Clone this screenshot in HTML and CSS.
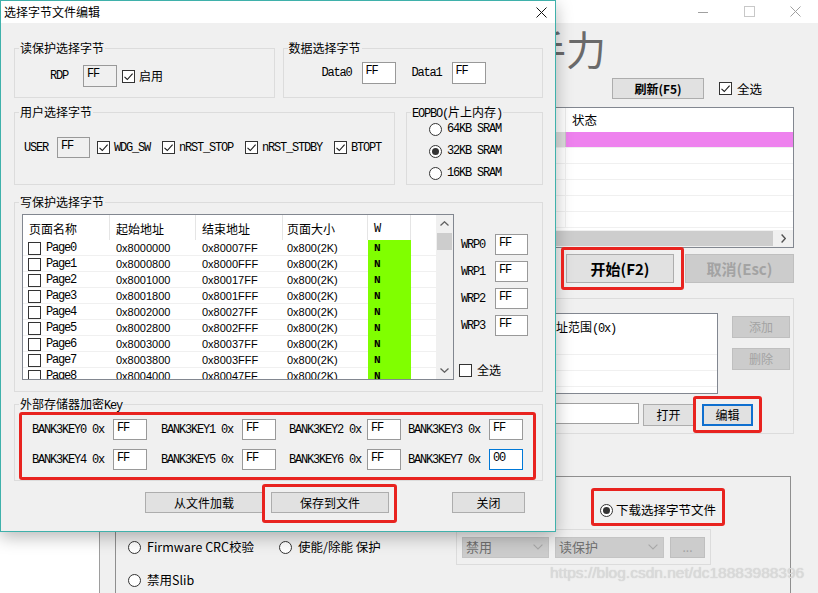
FILE: index.html
```html
<!DOCTYPE html>
<html lang="zh-CN">
<head>
<meta charset="utf-8">
<title>选择字节文件编辑</title>
<link rel="stylesheet" href="styles.css">
</head>
<body>
<div class="desktop">

  <div class="mainwin">
    <div class="mw-title">
      <span class="wc"><svg width="12" height="12" viewBox="0 0 12 12"><path d="M1 6.5H11" stroke="#a0a0a0" stroke-width="1"/></svg></span>
      <span class="wc"><svg width="11" height="11" viewBox="0 0 11 11"><rect x="0.5" y="0.5" width="10" height="10" fill="none" stroke="#c8c8c8" stroke-width="1"/></svg></span>
      <span class="wc"><svg width="11" height="11" viewBox="0 0 11 11"><path d="M0.5 0.5L10.5 10.5M10.5 0.5L0.5 10.5" stroke="#a0a0a0" stroke-width="1"/></svg></span>
    </div>
    <div class="mw-body">
      <div class="apptitle">手力</div>
      <div class="toolbar">
        <div class="btn refresh">刷新(F5)</div>
        <span class="cb tb-cb"><svg viewBox="0 0 11 11" width="11" height="11"><path d="M1.5 5.8 4.3 8.5 9.6 2.6" fill="none" stroke="#1a1a1a" stroke-width="1.1"/></svg></span>
        <span class="cb-lbl">全选</span>
      </div>
      <div class="applist">
        <div class="al-head"><div class="al-c1">端口</div><div class="al-c2">状态</div></div>
        <div class="al-row sel"><div class="al-c1"></div><div class="al-c2"></div></div>
        <div class="al-row"><div class="al-c1"></div><div class="al-c2"></div></div>
        <div class="al-row"><div class="al-c1"></div><div class="al-c2"></div></div>
        <div class="al-row"><div class="al-c1"></div><div class="al-c2"></div></div>
        <div class="al-row"><div class="al-c1"></div><div class="al-c2"></div></div>
        <div class="al-row"><div class="al-c1"></div><div class="al-c2"></div></div>
        <div class="hscroll">
          <div class="hs-thumb"></div>
          <div class="hs-arrow"><svg width="5" height="9" viewBox="0 0 5 9"><path d="M0.6 0.6 4.3 4.5 0.6 8.4" fill="none" stroke="#505050" stroke-width="1.4"/></svg></div>
        </div>
      </div>
      <div class="actions">
        <div class="btn bigbtn start">开始(F2)</div>
        <div class="btn bigbtn cancel dis">取消(Esc)</div>
      </div>
      <div class="mgroup">
        <div class="mg-top">
          <div class="addrlist">
            <div class="ad-head">地址范围<span class="mono">(0x)</span></div>
            <div class="ad-row"></div>
            <div class="ad-row"></div>
            <div class="ad-row"></div>
          </div>
          <div class="side-btns">
            <div class="btn sbtn dis">添加</div>
            <div class="btn sbtn dis">删除</div>
          </div>
        </div>
        <div class="fileline">
          <div class="fileinput"></div>
          <div class="btn fbtn open">打开</div>
          <div class="btn fbtn edit">编辑</div>
        </div>
      </div>
      <div class="lower">
        <div class="rowA">
          <span class="rb on"></span><span class="rb-lbl dl">下载选择字节文件</span>
        </div>
        <div class="rowB">
          <div class="ropt ropt1"><span class="rb"></span><span class="rb-lbl">Firmware CRC校验</span></div>
          <div class="ropt ropt2"><span class="rb"></span><span class="rb-lbl">使能/除能 保护</span></div>
          <div class="combos">
            <div class="combo c-dis">禁用<svg width="10" height="6" viewBox="0 0 10 6"><path d="M0.6 0.6 5 5 9.4 0.6" fill="none" stroke="#a8a8a8" stroke-width="1.1"/></svg></div>
            <div class="combo c-rp">读保护<svg width="10" height="6" viewBox="0 0 10 6"><path d="M0.6 0.6 5 5 9.4 0.6" fill="none" stroke="#a8a8a8" stroke-width="1.1"/></svg></div>
            <div class="btn dis dots">...</div>
          </div>
        </div>
        <div class="rowC">
          <span class="rb"></span><span class="rb-lbl">禁用Slib</span>
        </div>
      </div>
    </div>
  </div>

  <div class="dialog">
    <div class="dlg-title">
      <span>选择字节文件编辑</span>
      <svg width="11" height="11" viewBox="0 0 11 11"><path d="M0.5 0.5L10.5 10.5M10.5 0.5L0.5 10.5" stroke="#111" stroke-width="1"/></svg>
    </div>
    <div class="dlg-body">
      <div class="row row1">
        <div class="grp g1">
          <div class="gt">读保护选择字节</div>
          <div class="gr">
            <span class="mono">RDP</span>
            <span class="inp ro mono rdp-inp">FF</span>
            <span class="cb rdp-cb"><svg viewBox="0 0 11 11" width="11" height="11"><path d="M1.5 5.8 4.3 8.5 9.6 2.6" fill="none" stroke="#1a1a1a" stroke-width="1.1"/></svg></span>
            <span class="cb-lbl">启用</span>
          </div>
        </div>
        <div class="grp g2">
          <div class="gt">数据选择字节</div>
          <div class="gr">
            <span class="mono">Data0</span>
            <span class="inp mono d-inp">FF</span>
            <span class="mono d1-lbl">Data1</span>
            <span class="inp mono d-inp">FF</span>
          </div>
        </div>
      </div>

      <div class="row row2">
        <div class="grp g3">
          <div class="gt">用户选择字节</div>
          <div class="gr">
            <span class="mono">USER</span>
            <span class="inp ro mono u-inp">FF</span>
            <span class="cb ucb first"><svg viewBox="0 0 11 11" width="11" height="11"><path d="M1.5 5.8 4.3 8.5 9.6 2.6" fill="none" stroke="#1a1a1a" stroke-width="1.1"/></svg></span>
            <span class="mono cb-lbl">WDG_SW</span>
            <span class="cb ucb"><svg viewBox="0 0 11 11" width="11" height="11"><path d="M1.5 5.8 4.3 8.5 9.6 2.6" fill="none" stroke="#1a1a1a" stroke-width="1.1"/></svg></span>
            <span class="mono cb-lbl">nRST_STOP</span>
            <span class="cb ucb"><svg viewBox="0 0 11 11" width="11" height="11"><path d="M1.5 5.8 4.3 8.5 9.6 2.6" fill="none" stroke="#1a1a1a" stroke-width="1.1"/></svg></span>
            <span class="mono cb-lbl">nRST_STDBY</span>
            <span class="cb ucb"><svg viewBox="0 0 11 11" width="11" height="11"><path d="M1.5 5.8 4.3 8.5 9.6 2.6" fill="none" stroke="#1a1a1a" stroke-width="1.1"/></svg></span>
            <span class="mono cb-lbl">BTOPT</span>
          </div>
        </div>
        <div class="grp g4">
          <div class="gt"><span class="mono">EOPBO(</span>片上内存<span class="mono">)</span></div>
          <div class="radios">
            <div class="rrow"><span class="rb"></span><span class="mono rr-lbl">64KB SRAM</span></div>
            <div class="rrow"><span class="rb on"></span><span class="mono rr-lbl">32KB SRAM</span></div>
            <div class="rrow"><span class="rb"></span><span class="mono rr-lbl">16KB SRAM</span></div>
          </div>
        </div>
      </div>

      <div class="grp g5">
        <div class="gt">写保护选择字节</div>
        <div class="g5-inner">
          <div class="ptable">
            <div class="pt-main">
              <div class="pt-head">
                <div>页面名称</div><div>起始地址</div><div>结束地址</div><div class="h4">页面大小</div><div class="mono">W</div><div class="blank"></div>
              </div>
              <div class="pt-row"><div class="pc1"><span class="cb"></span><span class="mono pname">Page0</span></div><div class="hex">0x8000000</div><div class="hex">0x80007FF</div><div class="hex sz">0x800(2K)</div><div class="wcell mono">N</div><div></div></div>
              <div class="pt-row"><div class="pc1"><span class="cb"></span><span class="mono pname">Page1</span></div><div class="hex">0x8000800</div><div class="hex">0x8000FFF</div><div class="hex sz">0x800(2K)</div><div class="wcell mono">N</div><div></div></div>
              <div class="pt-row"><div class="pc1"><span class="cb"></span><span class="mono pname">Page2</span></div><div class="hex">0x8001000</div><div class="hex">0x80017FF</div><div class="hex sz">0x800(2K)</div><div class="wcell mono">N</div><div></div></div>
              <div class="pt-row"><div class="pc1"><span class="cb"></span><span class="mono pname">Page3</span></div><div class="hex">0x8001800</div><div class="hex">0x8001FFF</div><div class="hex sz">0x800(2K)</div><div class="wcell mono">N</div><div></div></div>
              <div class="pt-row"><div class="pc1"><span class="cb"></span><span class="mono pname">Page4</span></div><div class="hex">0x8002000</div><div class="hex">0x80027FF</div><div class="hex sz">0x800(2K)</div><div class="wcell mono">N</div><div></div></div>
              <div class="pt-row"><div class="pc1"><span class="cb"></span><span class="mono pname">Page5</span></div><div class="hex">0x8002800</div><div class="hex">0x8002FFF</div><div class="hex sz">0x800(2K)</div><div class="wcell mono">N</div><div></div></div>
              <div class="pt-row"><div class="pc1"><span class="cb"></span><span class="mono pname">Page6</span></div><div class="hex">0x8003000</div><div class="hex">0x80037FF</div><div class="hex sz">0x800(2K)</div><div class="wcell mono">N</div><div></div></div>
              <div class="pt-row"><div class="pc1"><span class="cb"></span><span class="mono pname">Page7</span></div><div class="hex">0x8003800</div><div class="hex">0x8003FFF</div><div class="hex sz">0x800(2K)</div><div class="wcell mono">N</div><div></div></div>
              <div class="pt-row"><div class="pc1"><span class="cb"></span><span class="mono pname">Page8</span></div><div class="hex">0x8004000</div><div class="hex">0x80047FF</div><div class="hex sz">0x800(2K)</div><div class="wcell mono">N</div><div></div></div>
            </div>
            <div class="vscroll">
              <div class="vs-btn"><svg width="9" height="5" viewBox="0 0 9 5"><path d="M0.5 4.5 4.5 0.8 8.5 4.5" fill="none" stroke="#606060" stroke-width="1.3"/></svg></div>
              <div class="vs-thumb"></div>
              <div class="vs-space"></div>
              <div class="vs-btn"><svg width="9" height="5" viewBox="0 0 9 5"><path d="M0.5 0.5 4.5 4.2 8.5 0.5" fill="none" stroke="#606060" stroke-width="1.3"/></svg></div>
            </div>
          </div>
          <div class="wrp">
            <div class="wrp-row first"><span class="mono wlbl">WRP0</span><span class="inp mono w-inp">FF</span></div>
            <div class="wrp-row"><span class="mono wlbl">WRP1</span><span class="inp mono w-inp">FF</span></div>
            <div class="wrp-row"><span class="mono wlbl">WRP2</span><span class="inp mono w-inp">FF</span></div>
            <div class="wrp-row"><span class="mono wlbl">WRP3</span><span class="inp mono w-inp">FF</span></div>
            <div class="wrp-all"><span class="cb"></span><span class="cb-lbl">全选</span></div>
          </div>
        </div>
      </div>

      <div class="grp g6">
        <div class="gt">外部存储器加密<span class="mono">Key</span></div>
        <div class="keys">
          <div class="kcell"><span class="mono klbl">BANK3KEY0 0x</span><span class="inp mono k-inp">FF</span></div>
          <div class="kcell"><span class="mono klbl">BANK3KEY1 0x</span><span class="inp mono k-inp">FF</span></div>
          <div class="kcell"><span class="mono klbl k3">BANK3KEY2 0x</span><span class="inp mono k-inp">FF</span></div>
          <div class="kcell"><span class="mono klbl">BANK3KEY3 0x</span><span class="inp mono k-inp">FF</span></div>
          <div class="kcell"><span class="mono klbl">BANK3KEY4 0x</span><span class="inp mono k-inp">FF</span></div>
          <div class="kcell"><span class="mono klbl">BANK3KEY5 0x</span><span class="inp mono k-inp">FF</span></div>
          <div class="kcell"><span class="mono klbl k3">BANK3KEY6 0x</span><span class="inp mono k-inp">FF</span></div>
          <div class="kcell"><span class="mono klbl">BANK3KEY7 0x</span><span class="inp mono k-inp focus">00</span></div>
        </div>
      </div>

      <div class="dlg-btns">
        <div class="btn dbtn">从文件加载</div>
        <div class="btn dbtn save">保存到文件</div>
        <div class="btn dbtn close">关闭</div>
      </div>
    </div>
  </div>

  <div class="mark mk-start"></div>
  <div class="mark mk-edit"></div>
  <div class="mark mk-dl"></div>
  <div class="mark mk-key"></div>
  <div class="mark mk-save"></div>

  <div class="watermark">https://blog.csdn.net/dc18883988396</div>
</div>
</body>
</html>
```

FILE: styles.css
```css
* { box-sizing: border-box; }

body {
  margin: 0;
  background: #fff;
  font-family: "Noto Sans CJK SC", "Noto Sans", sans-serif;
  font-size: 12px;
  line-height: 16px;
  color: #000;
}

.desktop {
  position: relative;
  width: 818px;
  height: 593px;
  overflow: hidden;
  background: #fff;
}

.mono {
  font-family: "Liberation Mono", "DejaVu Sans Mono", monospace;
  font-size: 12px;
  letter-spacing: -1.2px;
}

/* ---------- common controls ---------- */
.btn {
  display: flex;
  align-items: center;
  justify-content: center;
  height: 21px;
  background: #e1e1e1;
  border: 1px solid #adadad;
  font-size: 12px;
  white-space: nowrap;
}
.btn.dis {
  background: #cccccc;
  border-color: #bfbfbf;
  color: #a3a3a3;
}

.cb {
  display: inline-flex;
  align-items: center;
  justify-content: center;
  width: 13px;
  height: 13px;
  flex: none;
  border: 1px solid #333;
  background: #fff;
}
.cb-lbl { margin-left: 4px; white-space: nowrap; }

.rb {
  display: inline-flex;
  align-items: center;
  justify-content: center;
  width: 13px;
  height: 13px;
  flex: none;
  border: 1px solid #333;
  border-radius: 50%;
  background: #fff;
}
.rb.on::after {
  content: "";
  width: 7px;
  height: 7px;
  border-radius: 50%;
  background: #333;
}

.inp {
  display: block;
  flex: none;
  width: 34px;
  height: 22px;
  border: 1px solid #999;
  background: #fff;
  padding: 2px 0 0 3px;
  line-height: 13px;
}
.inp.ro { background: #f0f0f0; }
.inp.focus { border-color: #0078d7; }

/* ---------- main (background) window ---------- */
.mainwin {
  position: absolute;
  left: 99px;
  top: 0;
  width: 719px;
  height: 593px;
  background: #f0f0f0;
  border-left: 1px solid #9d9d9d;
}
.mw-title {
  height: 23px;
  background: #fff;
  display: flex;
  justify-content: flex-end;
}
.wc {
  width: 46px;
  height: 23px;
  display: flex;
  align-items: center;
  justify-content: center;
}
.mw-body {
  display: flex;
  flex-direction: column;
  padding: 0 24px 0 15px;
}
.apptitle {
  margin-top: 3px;
  height: 44px;
  line-height: 44px;
  font-size: 40px;
  color: #6a6a6a;
  padding-left: 411px;
  white-space: nowrap;
}
.toolbar {
  margin-top: 8px;
  height: 21px;
  display: flex;
  align-items: center;
  padding-left: 497px;
}
.refresh { width: 92px; font-weight: bold; }
.tb-cb { margin-left: 15px; }
.toolbar .cb-lbl { margin-left: 5px; font-size: 12.5px; }

.applist {
  margin-top: 8px;
  height: 141px;
  border: 1px solid #828790;
  background: #fff;
  display: flex;
  flex-direction: column;
}
.al-head { height: 24px; display: flex; line-height: 24px; font-size: 12.5px; }
.al-c1 { width: 450px; border-right: 1px solid #ececec; flex: none; color: #fff; }
.al-c2 { flex: 1; padding-left: 6px; }
.al-row { height: 16px; display: flex; border-bottom: 1px solid #f0f0f0; }
.al-row .al-c1 { border-right-color: #f0f0f0; }
.al-row.sel .al-c1 { background: #dcdcdc; border-right: 1px solid #c6c6c6; }
.al-row.sel .al-c2 { background: #ee82ee; }
.hscroll {
  margin-top: auto;
  height: 17px;
  display: flex;
  background: #f0f0f0;
}
.hs-thumb { width: 657px; background: #cdcdcd; margin: 1px 0; }
.hs-arrow { flex: 1; display: flex; align-items: center; justify-content: center; }

.actions {
  margin-top: 6px;
  display: flex;
  padding-left: 451px;
}
.bigbtn { height: 29px; font-size: 15px; font-weight: bold; }
.start { width: 108px; }
.cancel { width: 109px; margin-left: 11px; color: #a9a9a9; }

.mgroup {
  margin-top: 15px;
  height: 136px;
  border: 1px solid #dcdcdc;
}
.mg-top { display: flex; margin-top: 14px; padding-left: 15px; }
.addrlist {
  width: 587px;
  height: 81px;
  border: 1px solid #828790;
  background: #fff;
}
.ad-head { height: 25px; line-height: 25px; padding-left: 412px; white-space: nowrap; }
.ad-row { height: 16px; border-bottom: 1px solid #f0f0f0; }
.side-btns {
  margin-left: 14px;
  padding-top: 3px;
  display: flex;
  flex-direction: column;
  gap: 10px;
}
.sbtn { width: 58px; height: 22px; }
.fileline {
  display: flex;
  align-items: flex-start;
  margin-top: 9px;
  padding-left: 15px;
}
.fileinput { width: 508px; height: 21px; border: 1px solid #a0a0a0; background: #fff; }
.fbtn { width: 51px; height: 22px; margin-top: 1px; }
.open { margin-left: 4px; }
.edit { margin-left: 8px; border: 2px solid #0f6fcf; }

.lower {
  margin-top: 42px;
  margin-right: 3px;
  height: 200px;
  border: 1px solid #8f8f8f;
}
.rowA, .rowC {
  height: 18px;
  display: flex;
  align-items: center;
}
.rowA { margin-top: 24px; padding-left: 484px; }
.rowC { margin-top: 6px; padding-left: 12px; }
.rb-lbl { margin-left: 6px; font-size: 12.5px; white-space: nowrap; }
.rb-lbl.dl { margin-left: 3px; }
.rowB {
  margin-top: 10px;
  height: 36px;
  display: flex;
  align-items: center;
  padding-left: 12px;
}
.ropt { display: flex; align-items: center; flex: none; }
.ropt1 { width: 151px; }
.ropt2 { width: 177px; }
.combos {
  width: 255px;
  height: 36px;
  border: 1px solid #dcdcdc;
  display: flex;
  align-items: center;
  padding-left: 5px;
}
.combo {
  height: 21px;
  background: #cccccc;
  border: 1px solid #c4c4c4;
  display: flex;
  align-items: center;
  justify-content: space-between;
  padding: 0 5px 0 3px;
  color: #6e6e6e;
  font-size: 13px;
  flex: none;
}
.c-dis { width: 87px; }
.c-rp { width: 109px; margin-left: 6px; }
.dots { width: 35px; margin-left: 6px; color: #a0a0a0; }

/* ---------- dialog ---------- */
.dialog {
  position: absolute;
  left: 0;
  top: 0;
  width: 556px;
  height: 532px;
  border: 1px solid #3fb1ab;
  background: #f0f0f0;
  box-shadow: 0 5px 16px rgba(0, 0, 0, 0.28);
}
.dlg-title {
  height: 22px;
  background: #fff;
  display: flex;
  align-items: center;
  justify-content: space-between;
  padding: 0 8px 0 3px;
}
.dlg-body { padding: 0 12px 0 13px; }
.row { display: flex; }
.row1 { margin-top: 25px; gap: 8px; }
.row2 { margin-top: 14px; gap: 11px; }

.grp { border: 1px solid #dcdcdc; }
.gt {
  width: fit-content;
  height: 16px;
  margin: -9px 0 0 4px;
  padding: 0 1px;
  background: #f0f0f0;
  line-height: 16px;
  white-space: nowrap;
}
.gr { display: flex; align-items: center; }

.g1, .g2 { width: 261px; height: 50px; }
.g1 .gr { margin-top: 9px; padding-left: 35px; }
.rdp-inp { margin-left: 15px; }
.rdp-cb { margin-left: 5px; }
.g2 .gr { margin-top: 6px; padding-left: 38px; }
.d-inp { margin-left: 10px; }
.d1-lbl { margin-left: 16px; }

.g3 { width: 381px; height: 73px; }
.g3 .gr { margin-top: 17px; padding-left: 9px; }
.u-inp { width: 33px; height: 21px; margin-left: 9px; }
.ucb { margin-left: 12px; }
.ucb.first { margin-left: 7px; }
.g4 { width: 137px; height: 73px; }
.radios { display: flex; flex-direction: column; gap: 4px; padding-left: 22px; }
.rrow { height: 18px; display: flex; align-items: center; }
.rr-lbl { margin-left: 5px; white-space: nowrap; }

.g5 { margin-top: 17px; height: 190px; }
.g5-inner { display: flex; margin-top: 4px; padding-left: 7px; }
.ptable {
  width: 432px;
  height: 166px;
  border: 1px solid #828790;
  background: #fff;
  display: flex;
  flex: none;
}
.pt-main { flex: 1; min-width: 0; overflow: hidden; }
.pt-head, .pt-row {
  display: grid;
  grid-template-columns: 87px 86px 87px 85px 43px 1fr;
}
.pt-head { height: 25px; }
.pt-head > div {
  display: flex;
  align-items: center;
  padding: 3px 0 0 6px;
  border-right: 1px solid #e5e5e5;
  white-space: nowrap;
}
.pt-head > .h4 { padding-left: 4px; }
.pt-head > .blank { border-right: none; }
.pt-row { height: 16px; border-bottom: 1px solid #f0f0f0; }
.pc1 { display: flex; align-items: center; padding-left: 5px; }
.pname { margin-left: 5px; }
.hex {
  display: flex;
  align-items: center;
  padding-left: 6px;
  font-family: "Liberation Sans", Arial, sans-serif;
  font-size: 11px;
  white-space: nowrap;
}
.hex.sz { padding-left: 4px; }
.wcell {
  background: #80ff00;
  display: flex;
  align-items: center;
  padding-left: 6px;
  font-size: 11px;
  font-weight: bold;
}
.vscroll {
  width: 17px;
  flex: none;
  background: #f0f0f0;
  display: flex;
  flex-direction: column;
}
.vs-btn { height: 17px; display: flex; align-items: center; justify-content: center; }
.vs-thumb { height: 17px; margin: 1px 1px 0; background: #cdcdcd; }
.vs-space { flex: 1; }

.wrp {
  margin-left: 5px;
  height: 166px;
  display: flex;
  flex-direction: column;
}
.wrp-row { height: 21px; display: flex; align-items: center; margin-top: 6px; }
.wrp-row.first { margin-top: 20px; }
.wlbl { margin-left: 2px; width: 34px; }
.w-inp { width: 33px; height: 21px; }
.wrp-all { margin-top: auto; margin-bottom: 2px; display: flex; align-items: center; }
.wrp-all .cb-lbl { margin-left: 5px; }

.g6 { margin-top: 12px; height: 77px; }
.keys {
  display: grid;
  grid-template-columns: 129px 128px 119px 1fr;
  row-gap: 9px;
  margin-top: 7px;
  padding-left: 17px;
}
.kcell { display: flex; align-items: center; }
.klbl { width: 81px; white-space: pre; }
.klbl.k3 { width: 78px; }
.k-inp { width: 34px; height: 21px; }

.dlg-btns { display: flex; margin-top: 11px; padding-left: 131px; }
.dbtn { width: 118px; }
.save { margin-left: 8px; }
.close { width: 73px; margin-left: 63px; }

/* ---------- annotations ---------- */
.mark {
  position: absolute;
  border: 3px solid #e8231f;
  border-radius: 3px;
}
.mk-start { left: 561px; top: 247px; width: 123px; height: 43px; }
.mk-edit  { left: 693px; top: 396px; width: 69px;  height: 37px; }
.mk-dl    { left: 591px; top: 488px; width: 134px; height: 38px; }
.mk-key   { left: 19px;  top: 412px; width: 517px; height: 68px; }
.mk-save  { left: 262px; top: 484px; width: 135px; height: 39px; }

.watermark {
  position: absolute;
  left: 550px;
  top: 563px;
  font-family: "Liberation Sans", Arial, sans-serif;
  font-size: 15.5px;
  line-height: 20px;
  color: #dadada;
  text-shadow: 0 0 1px rgba(150, 150, 150, 0.45);
  white-space: nowrap;
}
```
